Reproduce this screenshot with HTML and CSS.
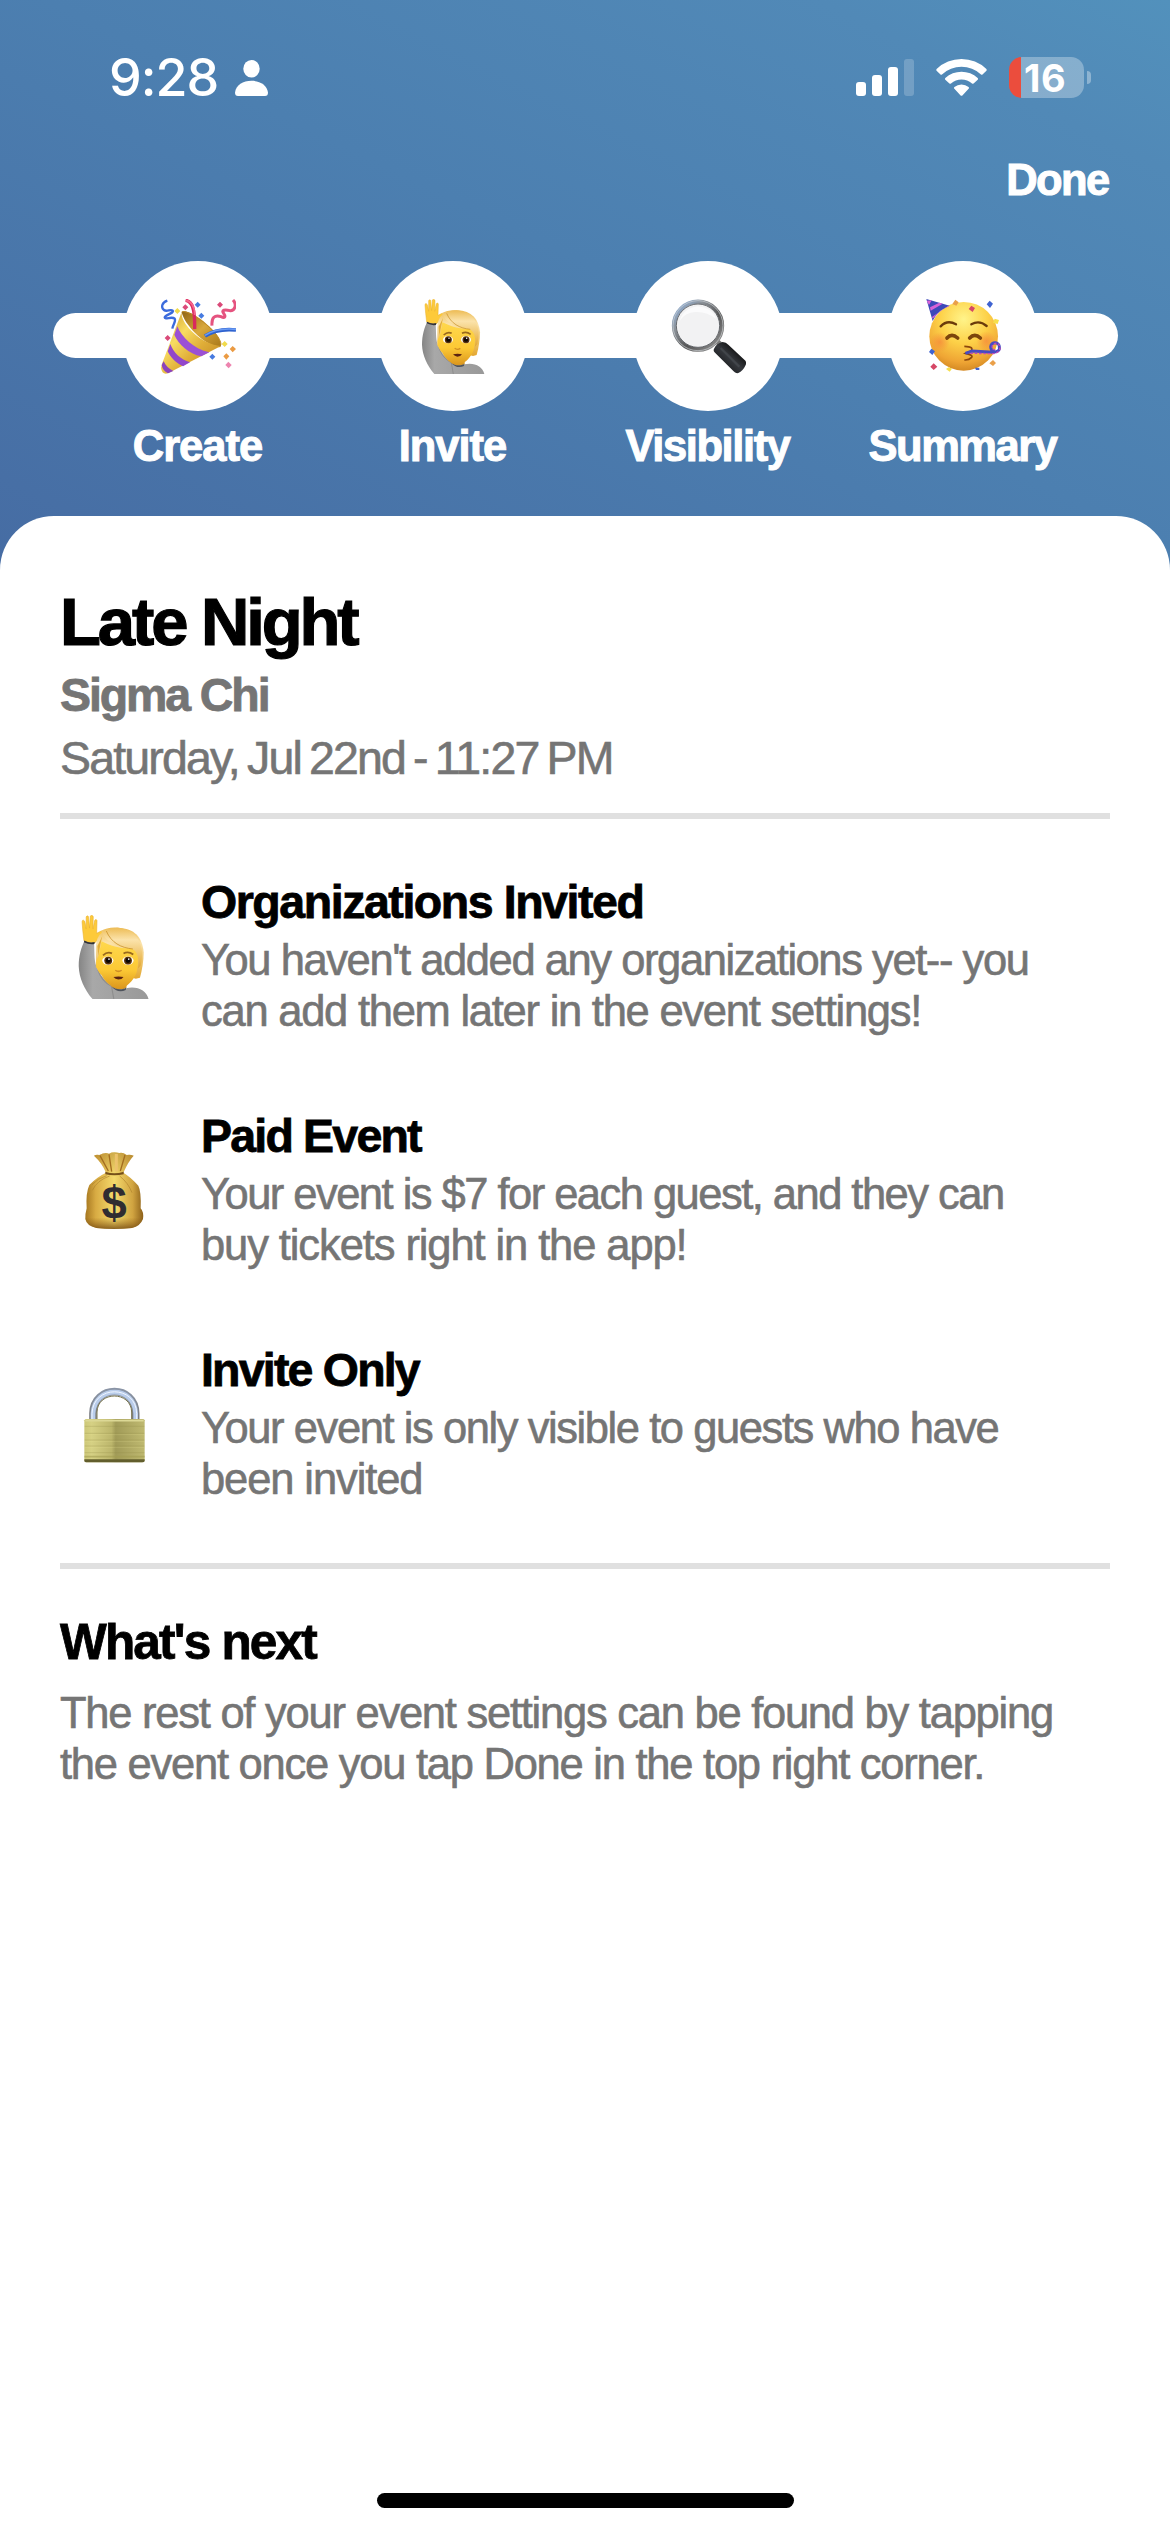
FILE: index.html
```html
<!DOCTYPE html>
<html lang="en">
<head>
<meta charset="utf-8">
<title>Event summary</title>
<link rel="stylesheet" href="styles.css">
</head>
<body>
<svg class="defs" width="0" height="0" aria-hidden="true">
  <defs>
    <linearGradient id="gold" x1="0" y1="0" x2="1" y2="1"><stop offset="0" stop-color="#c8921e"/><stop offset=".35" stop-color="#f8dc62"/><stop offset=".6" stop-color="#e0ae38"/><stop offset="1" stop-color="#b87f1c"/></linearGradient>
    <linearGradient id="inner" x1="0" y1="0" x2="1" y2="1"><stop offset="0" stop-color="#8f6412"/><stop offset=".5" stop-color="#d9a83c"/><stop offset="1" stop-color="#a87818"/></linearGradient>
    <linearGradient id="hair" x1="0" y1="0" x2="0" y2="1"><stop offset="0" stop-color="#edbc55"/><stop offset=".3" stop-color="#fbe3ab"/><stop offset="1" stop-color="#e3a72f"/></linearGradient>
    <linearGradient id="skin" x1="0" y1="0" x2="0" y2="1"><stop offset="0" stop-color="#ffd84d"/><stop offset=".6" stop-color="#fcc935"/><stop offset="1" stop-color="#dc971d"/></linearGradient>
    <linearGradient id="sleeve" x1="0" y1="0" x2="1" y2="0"><stop offset="0" stop-color="#858585"/><stop offset=".2" stop-color="#a8a8a8"/><stop offset="1" stop-color="#999"/></linearGradient>
    <linearGradient id="rim" x1="0" y1="0" x2="1" y2="1"><stop offset="0" stop-color="#8fb5e4"/><stop offset=".3" stop-color="#8c9299"/><stop offset=".6" stop-color="#555"/><stop offset="1" stop-color="#999"/></linearGradient>
    <linearGradient id="handle" x1="0" y1="1" x2="1" y2="0"><stop offset="0" stop-color="#050505"/><stop offset=".5" stop-color="#35383d"/><stop offset=".75" stop-color="#111"/><stop offset="1" stop-color="#090909"/></linearGradient>
    <radialGradient id="face" cx=".5" cy=".25" r=".78"><stop offset="0" stop-color="#fff48a"/><stop offset=".45" stop-color="#fdd148"/><stop offset=".8" stop-color="#efa534"/><stop offset="1" stop-color="#cf8420"/></radialGradient>
    <radialGradient id="blush"><stop offset="0" stop-color="#f6813a" stop-opacity=".65"/><stop offset="1" stop-color="#f6813a" stop-opacity="0"/></radialGradient>
    <linearGradient id="sack" x1="0" y1="0" x2="1" y2="0"><stop offset="0" stop-color="#a5761f"/><stop offset=".18" stop-color="#d8ab43"/><stop offset=".5" stop-color="#f5da6c"/><stop offset=".82" stop-color="#d0a340"/><stop offset="1" stop-color="#8d611a"/></linearGradient>
    <linearGradient id="sackshade" x1="0" y1="0" x2="0" y2="1"><stop offset="0" stop-color="#8a5a12" stop-opacity=".35"/><stop offset=".3" stop-color="#8a5a12" stop-opacity="0"/><stop offset=".85" stop-color="#8a5a12" stop-opacity="0"/><stop offset="1" stop-color="#704510" stop-opacity=".8"/></linearGradient>
    <linearGradient id="brass" x1="0" y1="0" x2="1" y2="0"><stop offset="0" stop-color="#cdc878"/><stop offset=".12" stop-color="#d6d184"/><stop offset=".45" stop-color="#bcb66c"/><stop offset=".52" stop-color="#a19b58"/><stop offset="1" stop-color="#bfb970"/></linearGradient>
    <linearGradient id="steel" x1="0" y1="0" x2="0" y2="1"><stop offset="0" stop-color="#8a94a5"/><stop offset="1" stop-color="#777"/></linearGradient>
    <symbol id="person" viewBox="47 39 225 225">
      <path d="M82 106 L106 113 C108 145 105 164 116 184 C124 201 138 217 153 229 C164 241 180 242 192 235 C220 228 247 240 252 264 H102 C80 238 66 207 65 176 C65 148 72 124 82 106Z" fill="url(#sleeve)"/>
      <path d="M116 185 C123 208 137 222 153 230 L159 264" fill="none" stroke="#747474" stroke-width="3" opacity=".45"/>
      <path d="M152 215 H193 V234 C180 242 164 241 152 230Z" fill="#d59725"/>
      <path d="M153 230 C164 240 180 240 192 234 L191 240 C178 246 163 244 153 230Z" fill="#4e535c"/>
      <path d="M79 108 L76 82 L74 57 Q74 52 78 53 Q81 54 82 60 L85 76 L85 44 Q87 39 91 43 L94 74 L96 42 Q100 37 104 43 L103 76 L108 53 Q112 48 114 54 L113 88 L125 82 Q134 80 136 84 L119 102 L108 114 Q92 114 79 108Z" fill="#fdca3a" stroke="#e8ae2c" stroke-width="1.5"/>
      <path d="M80 107 Q93 115 108 111 L107 117 Q92 119 79 112Z" fill="#30323a"/>
      <path d="M111 125 C112 90 130 74 170 73 C215 75 235 98 239 139 C239 160 235 186 229 207 L218 210 L111 180Z" fill="url(#hair)"/>
      <path d="M126 109 C154 123 186 132 217 127 C225 135 227 161 220 193 C212 215 191 236 173 236 C151 235 134 216 126 200 C118 193 111 178 112 170 C110 158 120 152 121 135Z" fill="url(#skin)"/>
      <path d="M125 82 C138 112 169 126 202 128 C220 131 228 151 224 182 L231 174 C239 143 235 111 214 91 C190 69 145 68 125 82Z" fill="url(#hair)"/>
      <path d="M139 82 C152 113 178 127 210 130" fill="none" stroke="#c68d24" stroke-width="2"/>
      <path d="M128 96 L122 124 L117 149 L115 122Z" fill="#e3ae38"/>
      <path d="M130 147 Q142 136 154 142 M185 142 Q198 135 211 145" fill="none" stroke="#98691d" stroke-width="5"/>
      <ellipse cx="143" cy="161" rx="15" ry="11" fill="#fff"/><ellipse cx="197" cy="161" rx="15" ry="11" fill="#fff"/>
      <circle cx="144" cy="161" r="10.5" fill="#57300d"/><circle cx="197" cy="161" r="10.5" fill="#57300d"/>
      <circle cx="144" cy="161" r="6.5" fill="#0b0603"/><circle cx="197" cy="161" r="6.5" fill="#0b0603"/>
      <circle cx="146" cy="157" r="2.3" fill="#fff"/><circle cx="199" cy="157" r="2.3" fill="#fff"/>
      <path d="M163 187 Q171 193 180 187" fill="none" stroke="#cf8e25" stroke-width="4"/>
      <path d="M158 205 Q172 202 185 205 Q181 212 171 212 Q163 211 158 205Z" fill="#5b2411"/>
    </symbol>
  </defs>
</svg>

<div class="screen">
  <header class="header">
    <div class="status">
      <div class="status-left">
        <span class="time">9:28</span>
        <svg class="user" viewBox="0 0 33 36"><ellipse cx="16.5" cy="8.8" rx="8.2" ry="8.8"/><path d="M3 36 Q0 36 0 32.5 C1 25 8 20.800 16.500 20.800 S32 25 33 32.500 Q33 36 30 36Z"/></svg>
      </div>
      <div class="status-right">
        <svg class="signal" viewBox="0 0 58 37"><rect y="23" width="10" height="14" rx="3"/><rect x="16" y="16" width="10" height="21" rx="3"/><rect x="32" y="8" width="10" height="29" rx="3"/><rect x="48" width="10" height="37" rx="3" opacity=".2"/></svg>
        <svg class="wifi" viewBox="0 0 51 37"><path d="M.6 10 A36 36 0 0 1 50.400 10 Q51 11 50.400 11.700 L46.500 15.500 Q45.800 16 45 15.400 A29 29 0 0 0 6 15.400 Q5.200 16 4.500 15.500 L.6 11.700 Q0 11 .6 10Z"/><path d="M9.300 19 A24 24 0 0 1 41.700 19 Q42.500 20 41.700 20.700 L37.600 24.600 Q36.800 25 36 24.400 A16 16 0 0 0 15 24.400 Q14.200 25 13.400 24.600 L9.300 20.700 Q8.500 20 9.300 19Z"/><path d="M18.400 28 A11 11 0 0 1 32.600 28 Q33.400 29 32.600 29.800 L26.400 36.400 Q25.500 37.200 24.600 36.400 L18.400 29.800 Q17.600 29 18.400 28Z"/></svg>
        <div class="battery"><div class="cell"><span>16</span></div><i class="tip"></i></div>
      </div>
    </div>
    <div class="nav"><a class="done">Done</a></div>
    <nav class="steps">
      <div class="step"><div class="bubble">
        <svg viewBox="33 39 225 225">
          <path d="M95 78 C115 62 213 138 213 176 C214 183 208 186 200 181 C160 174 103 116 95 78Z" fill="url(#inner)"/>
          <path d="M95 78 C90 113 154 176 213 180 L54 262 Q36 267 33 246 Q36 230 44 212Z" fill="url(#gold)"/>
          <path d="M82 121 C95 155 132 189 178 199 L154 211 C116 203 86 176 73 146Z" fill="#9b50d5"/>
          <path d="M61 174 C71 201 92 220 120 229 L99 241 C75 230 60 211 53 196Z" fill="#9246cb"/>
          <path d="M41 226 Q49 245 70 255 L54 262 Q38 254 35 237Z" fill="#8b42bd"/>
          <path d="M95 78 C112 66 213 139 213 176" fill="none" stroke="#bd8a25" stroke-width="3"/>
          <path d="M107 43 C125 46 135 63 134 129" fill="none" stroke="#d9295e" stroke-width="10"/>
          <path d="M107 43 C125 46 134 60 134 87" fill="none" stroke="#f5648b" stroke-width="5"/>
          <path d="M165 150 C188 135 217 128 258 132" fill="none" stroke="#2e62cf" stroke-width="11"/>
          <path d="M165 148 C188 133 217 126 258 130" fill="none" stroke="#6a9bf4" stroke-width="5"/>
          <path d="M52 44 C36 49 32 64 42 72 C50 79 62 68 68 74 C73 82 47 85 44 94 C44 102 66 90 74 98 C79 106 69 114 67 128" fill="none" stroke="#3b6bdc" stroke-width="7"/>
          <path d="M249 42 C262 56 254 75 240 74 C224 70 213 72 221 82 C229 94 223 97 213 92 C194 85 184 95 186 119" fill="none" stroke="#e5537f" stroke-width="9"/>
          <g fill="#f1db4c"><path d="m82 66 9 9-9 9-9-9zM224 165l9 9-9 9-9-9z"/></g><g fill="#da4a79"><path d="m106 55 9 9-9 9-9-9zM210 47l9 9-9 9-9-9zM53 147l9 9-9 9-9-9z"/></g><g fill="#477be0"><path d="m143 47 9 9-9 9-9-9zM154 80l9 9-9 9-9-9zM187 203l9 9-9 9-9-9z"/></g><path fill="#eb9b43" d="m248 180 10 9-10 10-9-10zM229 202l9 9-9 10-9-10z"/><path fill="#ed84af" d="m235 227 10 10-9 10-10-10z"/>
        </svg></div><span class="label">Create</span></div>
      <div class="step"><div class="bubble"><svg><use href="#person"/></svg></div><span class="label">Invite</span></div>
      <div class="step"><div class="bubble">
        <svg viewBox="32 39 225 225">
          <path d="M157 166 L171 157 L188 172 L178 183Z" fill="#777"/>
          <ellipse cx="113" cy="119" rx="73" ry="74" fill="#f2f2f3"/>
          <circle cx="113" cy="119" r="72" fill="none" stroke="url(#rim)" stroke-width="13"/>
          <circle cx="113" cy="119" r="75" fill="none" stroke="#cfd3d7" stroke-width="2"/>
          <circle cx="113" cy="119" r="65" fill="none" stroke="#4f5358" stroke-width="2.500"/>
          <path d="M58 105 Q68 67 112 61 Q156 65 168 99 Q139 76 105 78 Q74 79 58 105Z" fill="#fff" opacity=".7"/>
          <path d="M162 187 Q168 172 187 168 Q197 168 204 176 L252 221 Q260 227 256 237 Q248 255 234 261 Q225 263 219 255 L164 200 Q157 194 162 187Z" fill="url(#handle)"/>
          <path d="M181 186 L237 242" fill="none" stroke="#777b82" stroke-width="7" opacity=".2"/>
        </svg></div><span class="label label-visibility">Visibility</span></div>
      <div class="step"><div class="bubble">
        <svg viewBox="48 39 225 225">
          <circle cx="161" cy="151" r="103" fill="url(#face)"/>
          <circle cx="89" cy="168" r="30" fill="url(#blush)"/><circle cx="229" cy="165" r="30" fill="url(#blush)"/>
          <path d="M49 39 L119 59 C96 68 78 83 68 105Z" fill="#3d49b9"/>
          <path d="M50 44 L65 43 L57 57Z M60 64 L88 50 L98 53 L62 74Z M66 93 L115 59 L119 59 L91 74 L68 98Z" fill="#d862d6"/>
          <path d="M92 121 Q112 100 138 115 M184 115 Q208 101 230 120" fill="none" stroke="#6b3b0b" stroke-width="7" stroke-linecap="round"/>
          <path d="M111 156 Q125 140 143 156 M179 156 Q194 140 211 156" fill="none" stroke="#7c450c" stroke-width="11" stroke-linecap="round"/>
          <path d="M163 181 Q195 182 182 196 L167 202 Q192 208 184 215 Q177 223 163 222" fill="none" stroke="#8c460b" stroke-width="5"/>
          <path d="M166 202 L186 195 L250 199 Q271 196 268 184 A13 13 0 1 0 254 196" fill="none" stroke="#474bc2" stroke-width="9"/>
          <path d="M181 202 L248 203 Q272 200 270 183 Q264 165 248 176 Q241 193 260 191" fill="none" stroke="#c54bb5" stroke-width="4" stroke-dasharray="8 5"/>
          <g fill="#3f63d1"><path d="m239 44 10 9-9 13-10-11zM64 188l11 8-8 11-10-9zM195 245h13v7h-10z"/></g><g fill="#d64766"><path d="m184 59 11 7-7 12-12-9zM71 232l11 10-11 10-10-10z"/></g><g fill="#eaa049"><path d="m136 41 10 8-7 10-12-5zM249 222l9 9-9 9-11-8z"/></g><g fill="#f6df4b"><path d="m254 98 13 4-4 12-14-4zM116 244l10 4-7 9-11-8z"/></g>
        </svg></div><span class="label label-summary">Summary</span></div>
    </nav>
  </header>

  <main class="sheet">
    <h1 class="title">Late Night</h1>
    <p class="host">Sigma Chi</p>
    <p class="date">Saturday, Jul 22nd - 11:27 PM</p>
    <hr class="rule">
    <section class="items">
      <article class="item"><svg class="emoji"><use href="#person"/></svg>
        <div><h2 class="heading-wide">Organizations Invited</h2><p class="text"><span>You haven't added any organizations yet-- you</span><br><span class="loose">can add them later in the event settings!</span></p></div></article>
      <article class="item">
        <svg class="emoji" viewBox="38 57 252 252">
          <path d="M104 77 Q111 72 120 75 Q137 66 149 71 Q161 64 180 69 Q190 66 202 75 Q213 73 223 77 Q207 94 192 128 Q214 141 237 167 Q246 184 244 235 Q254 246 251 267 Q242 289 218 294 Q163 300 111 294 Q82 287 78 267 Q77 253 82 235 Q79 188 90 165 Q111 142 140 128 Q128 99 104 77Z" fill="url(#sack)"/>
          <path d="M104 77 Q111 72 120 75 Q137 66 149 71 Q161 64 180 69 Q190 66 202 75 Q213 73 223 77 Q207 94 192 128 Q214 141 237 167 Q246 184 244 235 Q254 246 251 267 Q242 289 218 294 Q163 300 111 294 Q82 287 78 267 Q77 253 82 235 Q79 188 90 165 Q111 142 140 128 Q128 99 104 77Z" fill="url(#sackshade)"/>
          <path d="M122 77 L147 123 M149 73 L157 125 M197 75 L183 123" fill="none" stroke="#a36d1f" stroke-width="4"/><path d="M171 72 L171 124" stroke="#edc36c" stroke-width="9"/>
          <path d="M138 125 Q165 134 193 125 V133 Q165 139 138 133Z" fill="#765019"/>
          <path d="M151 138 Q113 151 99 181 M181 138 Q207 159 218 188 M142 137 Q115 145 98 164" fill="none" stroke="#ac7e29" stroke-width="3" opacity=".6"/>
          <text x="164" y="266" class="dollar">$</text>
        </svg>
        <div><h2>Paid Event</h2><p class="text"><span class="tight">Your event is $7 for each guest, and they can</span><br><span class="looser">buy tickets right in the app!</span></p></div></article>
      <article class="item">
        <svg class="emoji" viewBox="38 759 252 252">
          <path d="M101 880 V850 C103 763 228 763 229 850 V880" fill="none" stroke="url(#steel)" stroke-width="23"/>
          <path d="M101 880 V850 C105 765 226 765 229 850 V880" fill="none" stroke="#b9cdeb" stroke-width="14"/>
          <path d="M98 880 V851 C101 763 231 764 232 851 V880" fill="none" stroke="#f1f6ff" stroke-width="3"/>
          <path d="M113 869 V846 C115 782 215 782 217 846 V869" fill="none" stroke="#79754d" stroke-width="3"/>
          <path d="M75 871 Q77 867 82 867 H250 Q255 867 256 871 V990 Q256 997 249 997 H81 Q75 997 75 990Z" fill="url(#brass)"/>
          <path d="M75 988 H256 V992 Q256 997 249 997 H81 Q75 997 75 992Z" fill="#625e2d"/>
          <path d="M78 872 H253" stroke="#dcd895" stroke-width="5"/>
          <path d="M76 889 H255 M76 910 H255 M76 930 H255 M76 948 H255 M76 968 H255" stroke="#918b45" stroke-width="2" opacity=".4"/><path d="M76 914 H255 M76 934 H255 M76 952 H255" stroke="#eeea9c" stroke-width="2" opacity=".3"/>
          <path d="M75 980 H256" stroke="#a39d50" stroke-width="5" opacity=".6"/>
        </svg>
        <div><h2>Invite Only</h2><p class="text"><span>Your event is only visible to guests who have</span><br><span class="looser">been invited</span></p></div></article>
    </section>
    <hr class="rule rule-last">
    <h2 class="next">What's next</h2>
    <p class="text next-text loose">The rest of your event settings can be found by tapping<br>the event once you tap Done in the top right corner.</p>
    <div class="home"></div>
  </main>
</div>
</body>
</html>
```
FILE: styles.css
```css
* { box-sizing: border-box; margin: 0; padding: 0; }
body { width: 1170px; background: #fff; font-family: "Liberation Sans", Arial, sans-serif; }
.defs { position: absolute; }
.screen { display: flex; flex-direction: column; height: 2532px; }
.header { height: 570px; flex: none; color: #fff; background: linear-gradient(to top right, #466ca3, #4c7fb0 52%, #5189b7 85%, #5291bc); }
.status { display: flex; justify-content: space-between; align-items: center; height: 155px; padding: 0 79px 0 109px; font-family: Inter, sans-serif; }
.status svg { fill: #fff; }
.status-left, .status-right { display: flex; align-items: center; }
.time { font-size: 52px; line-height: 60px; font-weight: 500; letter-spacing: -1px; width: 126px; white-space: nowrap; }
.user { width: 33px; height: 36px; }
.signal { width: 58px; height: 37px; margin-right: 22px; }
.wifi { width: 51px; height: 37px; margin-right: 22px; }
.battery { display: flex; align-items: center; gap: 3px; }
.cell { width: 75px; height: 41px; border-radius: 13px; padding-left: 15px; background: linear-gradient(to right, #eb4d3d 12px, rgba(255,255,255,.3) 12px); }
.cell span { display: block; font-size: 38px; line-height: 42px; font-weight: 700; letter-spacing: .5px; }
.tip { width: 4px; height: 13px; border-radius: 0 4px 4px 0; background: rgba(255,255,255,.35); }
.nav { display: flex; justify-content: flex-end; padding-right: 63px; height: 106px; }
.done { font-size: 43.5px; line-height: 50px; font-weight: 700; letter-spacing: -1.6px; margin-right: -1.5px; -webkit-text-stroke: 1px #fff; }
.steps { display: grid; grid-template-columns: repeat(4, 255px); margin-left: 53px; width: 1065px; padding-left: 17px; position: relative; z-index: 0; }
.steps::before { content: ""; position: absolute; z-index: -1; left: 0; right: 0; top: 52px; height: 45px; border-radius: 23px; background: #fff; }
.step { display: flex; flex-direction: column; align-items: center; }
.bubble { width: 150px; height: 150px; border-radius: 50%; background: #fff; display: grid; place-items: center; padding-left: 2px; }
.bubble svg { width: 75px; height: 75px; }
.label { margin-top: 10px; font-size: 43.5px; line-height: 50px; font-weight: 700; letter-spacing: -1px; -webkit-text-stroke: 1px #fff; white-space: nowrap; }
.label-visibility { letter-spacing: -1.4px; }
.label-summary { letter-spacing: -1.5px; }
.sheet { position: relative; flex: 1; margin-top: -54px; padding: 66px 60px 0; border-radius: 54px 54px 0 0; background: #fff; color: #000; white-space: nowrap; }
.title { font-size: 67px; line-height: 80px; letter-spacing: -3.1px; -webkit-text-stroke: 1.2px; }
.host { margin-top: 3px; font-size: 46.5px; line-height: 60px; font-weight: 700; letter-spacing: -2.1px; color: #757575; -webkit-text-stroke: .8px; }
.date { margin-top: 3px; font-size: 46.5px; line-height: 60px; letter-spacing: -1.85px; word-spacing: -3px; color: #757575; -webkit-text-stroke: .6px; }
.rule { height: 6px; border: 0; margin-top: 25px; background: #e0e0e0; }
.items { display: flex; flex-direction: column; gap: 69px; padding-top: 53px; }
.item { display: flex; height: 165px; }
.emoji { flex: none; width: 84px; height: 84px; margin: 43px 45px 0 12px; }
.dollar { font: 700 136px "Liberation Sans", sans-serif; text-anchor: middle; fill: #302c31; }
h2 { font-size: 46.5px; line-height: 60px; letter-spacing: -1.8px; -webkit-text-stroke: .8px; }
.heading-wide { letter-spacing: -1.45px; }
.text { margin-top: 3px; font-size: 43.5px; line-height: 51px; letter-spacing: -1.43px; color: #757575; -webkit-text-stroke: .6px; }
.tight { letter-spacing: -1.53px; }
.loose { letter-spacing: -1.25px; }
.looser { letter-spacing: -1.1px; }
.rule-last { margin-top: 58px; }
.next { margin-top: 43px; font-size: 49.5px; }
.next-text { margin-top: 16px; }
.home { position: absolute; left: 377px; bottom: 24px; width: 417px; height: 15px; border-radius: 8px; background: #000; }
```
